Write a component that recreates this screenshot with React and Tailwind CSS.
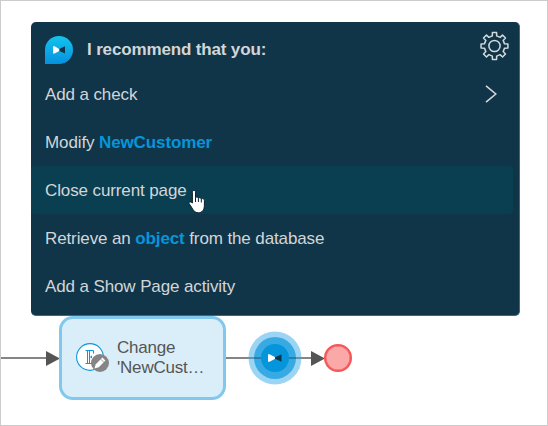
const FONT = "font-['Liberation_Sans',Arial,sans-serif]";

function AssistLogo() {
  return (
    <svg className="block h-7 w-7" viewBox="0 0 28 28">
      <defs>
        <linearGradient id="assist" x1="0" y1="0" x2="0" y2="1">
          <stop offset="0" stopColor="#14c4ee" />
          <stop offset="1" stopColor="#0591de" />
        </linearGradient>
      </defs>
      <path d="M0 28V14A14 14 0 0 1 14 0A14 14 0 0 1 28 14A14 14 0 0 1 14 28Z" fill="url(#assist)" />
      <path d="M20 10.2L13.2 13.4Q12.7 14 13.2 14.5L20 17.5Z" fill="#103548" />
      <path d="M8 10.2H9.6L14.2 12.9Q14.8 13.9 14.2 14.9L9.6 17.5H8Z" fill="#fff" />
    </svg>
  );
}

function Gear() {
  const teeth = [];
  for (let i = 0; i < 8; i++) {
    const rot = (i * Math.PI) / 4;
    [[10.3, -0.21], [13.6, -0.155], [13.6, 0.155], [10.3, 0.21]].forEach(([r, a]) => {
      teeth.push(`${(14.5 + r * Math.sin(rot + a)).toFixed(2)},${(15 - r * Math.cos(rot + a)).toFixed(2)}`);
    });
  }
  return (
    <svg className="block h-[30px] w-[30px]" viewBox="0 0 30 30" fill="none" stroke="#d2d9dd" strokeWidth="1.5" strokeLinejoin="round">
      <polygon points={teeth.join(" ")} />
      <circle cx="14.5" cy="15" r="5.6" />
    </svg>
  );
}

function HandCursor() {
  return (
    <svg className="absolute left-[157px] top-[23px] h-[26px] w-[18px]" viewBox="0 0 18 26">
      <path
        d="M4.4 14V3.2C4.4 .8 7.5 .8 7.5 3.2V8.6C8.5 7.6 10.1 8 10.4 9.2C11.3 8.3 13 8.6 13.3 9.9C14.4 9.2 16.4 9.7 16.4 11.5V16C16.4 21 14 23.8 10.4 23.8C6.8 23.8 5.4 21.5 4.1 19.1L1.2 14.8C.2 13 2.3 12 4.4 14Z"
        fill="#fff"
        stroke="#0b1f2a"
        strokeWidth="1"
      />
      <path d="M7.5 8.5V13M10.4 9.3V13M13.3 10V13.5" stroke="#0b1f2a" strokeWidth="1" />
    </svg>
  );
}

function Row({ children, active }) {
  return (
    <li
      className={
        active
          ? "relative mr-[6px] flex h-12 items-center rounded bg-[#0a3f52] pl-[14px] pt-[2px]"
          : "flex h-12 items-center pl-[14px] pr-[22px] pt-[2px]"
      }
    >
      {children}
    </li>
  );
}

function Keyword({ children }) {
  return <b className="font-bold text-[#0595db]">{children}</b>;
}

function Recommendations() {
  return (
    <section className="ml-[30px] mt-[21px] h-[294px] w-[489px] rounded-[5px] border-b border-r border-[#426579] bg-[#103548] text-[17px] leading-[20px] tracking-[-0.115px] text-[#d2d6d9]">
      <header className="flex h-12 items-start pl-[14px] pr-[9px] pt-[9px]">
        <div className="pt-[5px]">
          <AssistLogo />
        </div>
        <h1 className="ml-[14px] mt-[9px] flex-1 font-bold tracking-[-0.15px]">I recommend that you:</h1>
        <Gear />
      </header>
      <ul>
        <Row>
          <span className="flex-1">Add a check</span>
          <svg className="-mt-[2px] h-[18px] w-3" viewBox="0 0 12 18" fill="none" stroke="#d2d6d9" strokeWidth="1.6">
            <path d="M1 .8L10.8 9L1 17.2" />
          </svg>
        </Row>
        <Row>
          <span>Modify <Keyword>NewCustomer</Keyword></span>
        </Row>
        <Row active>
          <span>Close current page</span>
          <HandCursor />
        </Row>
        <Row>
          <span>Retrieve an <Keyword>object</Keyword> from the database</span>
        </Row>
        <Row>
          <span>Add a Show Page activity</span>
        </Row>
      </ul>
    </section>
  );
}

function EntityIcon() {
  return (
    <svg className="block h-[30px] w-[34px] shrink-0" viewBox="0 0 34 30">
      <circle cx="14" cy="14" r="13.4" fill="#fff" stroke="#0a98dc" strokeWidth="1.1" />
      <path
        d="M9.5 7.5H17.5V10.5M9.5 20.5H16M11.5 7.5V20.5M13.5 7.5V20.5M13.5 14H16M15.5 12.8V15.2"
        fill="none"
        stroke="#0a98dc"
        strokeWidth="1"
      />
      <circle cx="24" cy="20" r="9" fill="#858585" />
      <path d="M18.4 25.6L19.8 21.2L26.4 14.6L29.4 17.6L22.8 24.2Z" fill="#fff" />
      <path d="M24.8 16.2L27.8 19.2" stroke="#858585" strokeWidth=".8" />
    </svg>
  );
}

function ArrowHead() {
  return (
    <svg className="block h-[15px] w-[14px] shrink-0" viewBox="0 0 14 15">
      <path d="M0 0L14 7.5L0 15Z" fill="#555" />
    </svg>
  );
}

function AssistNode() {
  return (
    <svg className="block h-[54px] w-[54px] shrink-0" viewBox="0 0 54 54">
      <circle cx="27" cy="27" r="26.5" fill="#9bd5f3" />
      <path d="M0 27H54" stroke="#6b93a6" strokeWidth="2" />
      <circle cx="27" cy="27" r="21" fill="#37aae3" />
      <path d="M6 27H48" stroke="#247fac" strokeWidth="2" />
      <circle cx="27" cy="27" r="14" fill="#0595db" />
      <path d="M33.5 23.3L26.7 26.5V27.5L33.5 30.7Z" fill="#103548" />
      <path d="M20 23.3H21.5L26.8 26Q27.5 27 26.8 28L21.5 30.7H20Z" fill="#fff" />
    </svg>
  );
}

function Flow() {
  return (
    <div className="flex h-[84px] items-center">
      <div className="h-[2px] w-[45px] bg-[#858585]" />
      <ArrowHead />
      <div className="-ml-px flex h-[84px] w-[167px] items-center rounded-[14px] border-[3px] border-[#82c8ed] bg-[#daeefa] pl-[14px]">
        <EntityIcon />
        <div className="ml-[7px] text-[17px] leading-[20px] tracking-[-0.2px] text-[#555]">
          <div>Change</div>
          <div>'NewCust…</div>
        </div>
      </div>
      <div className="h-[2px] w-[22px] bg-[#858585]" />
      <AssistNode />
      <div className="h-[2px] w-[9px] bg-[#858585]" />
      <ArrowHead />
      <div className="-ml-px h-7 w-7 rounded-full border-[2.5px] border-[#f55656] bg-[#faa8a8] shadow-[inset_0_0_0_0.5px_#f55656]" />
    </div>
  );
}

export default function App() {
  return (
    <main className={`flex h-[426px] w-[548px] flex-col overflow-hidden border border-[#ccc] bg-white ${FONT}`}>
      <Recommendations />
      <Flow />
    </main>
  );
}
